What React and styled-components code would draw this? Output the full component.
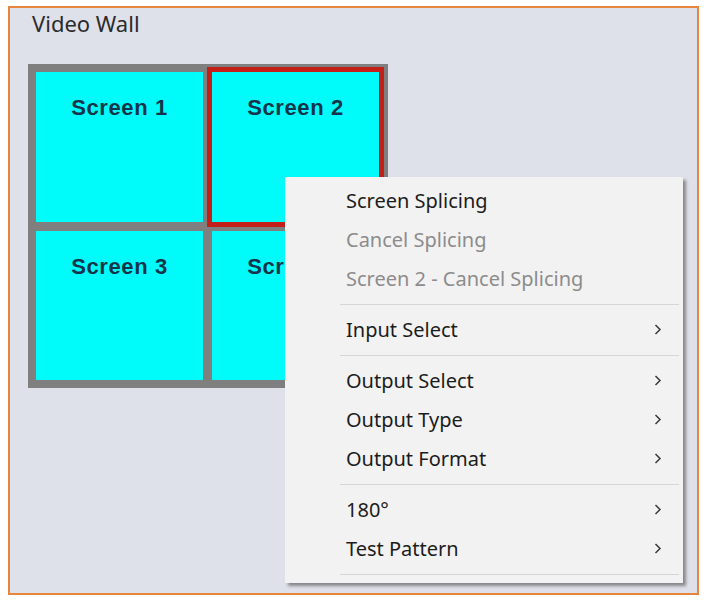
import React from 'react';
import styled, { createGlobalStyle } from 'styled-components';

const GlobalStyle = createGlobalStyle`
  html, body {
    margin: 0;
    padding: 0;
    background: #ffffff;
  }
  * {
    box-sizing: border-box;
  }
`;

const Page = styled.div`
  width: 709px;
  height: 601px;
  padding: 6px 10px 6px 8px;
`;

const Frame = styled.div`
  position: relative;
  width: 691px;
  height: 589px;
  border: 2px solid #e8853d;
  background: #dfe1ea;
  padding: 1px 18px;
`;

const Title = styled.div`
  font-family: 'Noto Sans', 'Open Sans', sans-serif;
  font-size: 22px;
  color: #2b2b2b;
  line-height: 29px;
  margin-left: 4px;
`;

const Wall = styled.div`
  display: grid;
  grid-template-columns: 167px 167px;
  grid-template-rows: 150px 149px;
  gap: 9px;
  padding: 8px;
  width: 360px;
  margin-top: 26px;
  background: #7f7f7f;
`;

const Cell = styled.div`
  background: #00fbfb;
  display: flex;
  justify-content: center;
  padding-top: 23px;
  font-family: 'Liberation Sans', Arial, sans-serif;
  font-weight: bold;
  font-size: 22px;
  letter-spacing: 0.6px;
  color: #12344a;
  outline: ${(p) => (p.$selected ? '5px solid #c41e18' : 'none')};
`;

const Menu = styled.div`
  position: absolute;
  left: 275px;
  top: 169px;
  width: 398px;
  padding: 4px 4px 3px 0;
  background: #f2f2f2;
  box-shadow: 3px 3px 3px rgba(0, 0, 0, 0.4);
  font-family: 'Noto Sans', 'Open Sans', sans-serif;
  font-size: 20px;
`;

const Item = styled.div`
  display: flex;
  align-items: center;
  justify-content: space-between;
  height: 39px;
  padding: 0 17px 0 61px;
  color: ${(p) => (p.$disabled ? '#8c8c8c' : '#1c1c1c')};
`;

const Separator = styled.div`
  height: 1px;
  margin: 6px 0 5px 55px;
  background: #d6d6d6;
`;

const Chevron = () => (
  <svg width="9" height="13" viewBox="0 0 9 13">
    <path d="M2.5 2 L7 6.5 L2.5 11" fill="none" stroke="#3a3a3a" strokeWidth="1.5" />
  </svg>
);

const groups = [
  [
    { label: 'Screen Splicing' },
    { label: 'Cancel Splicing', disabled: true },
    { label: 'Screen 2 - Cancel Splicing', disabled: true },
  ],
  [{ label: 'Input Select', sub: true }],
  [
    { label: 'Output Select', sub: true },
    { label: 'Output Type', sub: true },
    { label: 'Output Format', sub: true },
  ],
  [
    { label: '180°', sub: true },
    { label: 'Test Pattern', sub: true },
  ],
];

const App = () => (
  <>
    <GlobalStyle />
    <Page>
      <Frame>
        <Title>Video Wall</Title>
        <Wall>
          <Cell>Screen 1</Cell>
          <Cell $selected>Screen 2</Cell>
          <Cell>Screen 3</Cell>
          <Cell>Screen 4</Cell>
        </Wall>
        <Menu>
          {groups.map((group, gi) => (
            <React.Fragment key={gi}>
              {group.map((item) => (
                <Item key={item.label} $disabled={item.disabled}>
                  <span>{item.label}</span>
                  {item.sub && <Chevron />}
                </Item>
              ))}
              <Separator />
            </React.Fragment>
          ))}
        </Menu>
      </Frame>
    </Page>
  </>
);

export default App;
